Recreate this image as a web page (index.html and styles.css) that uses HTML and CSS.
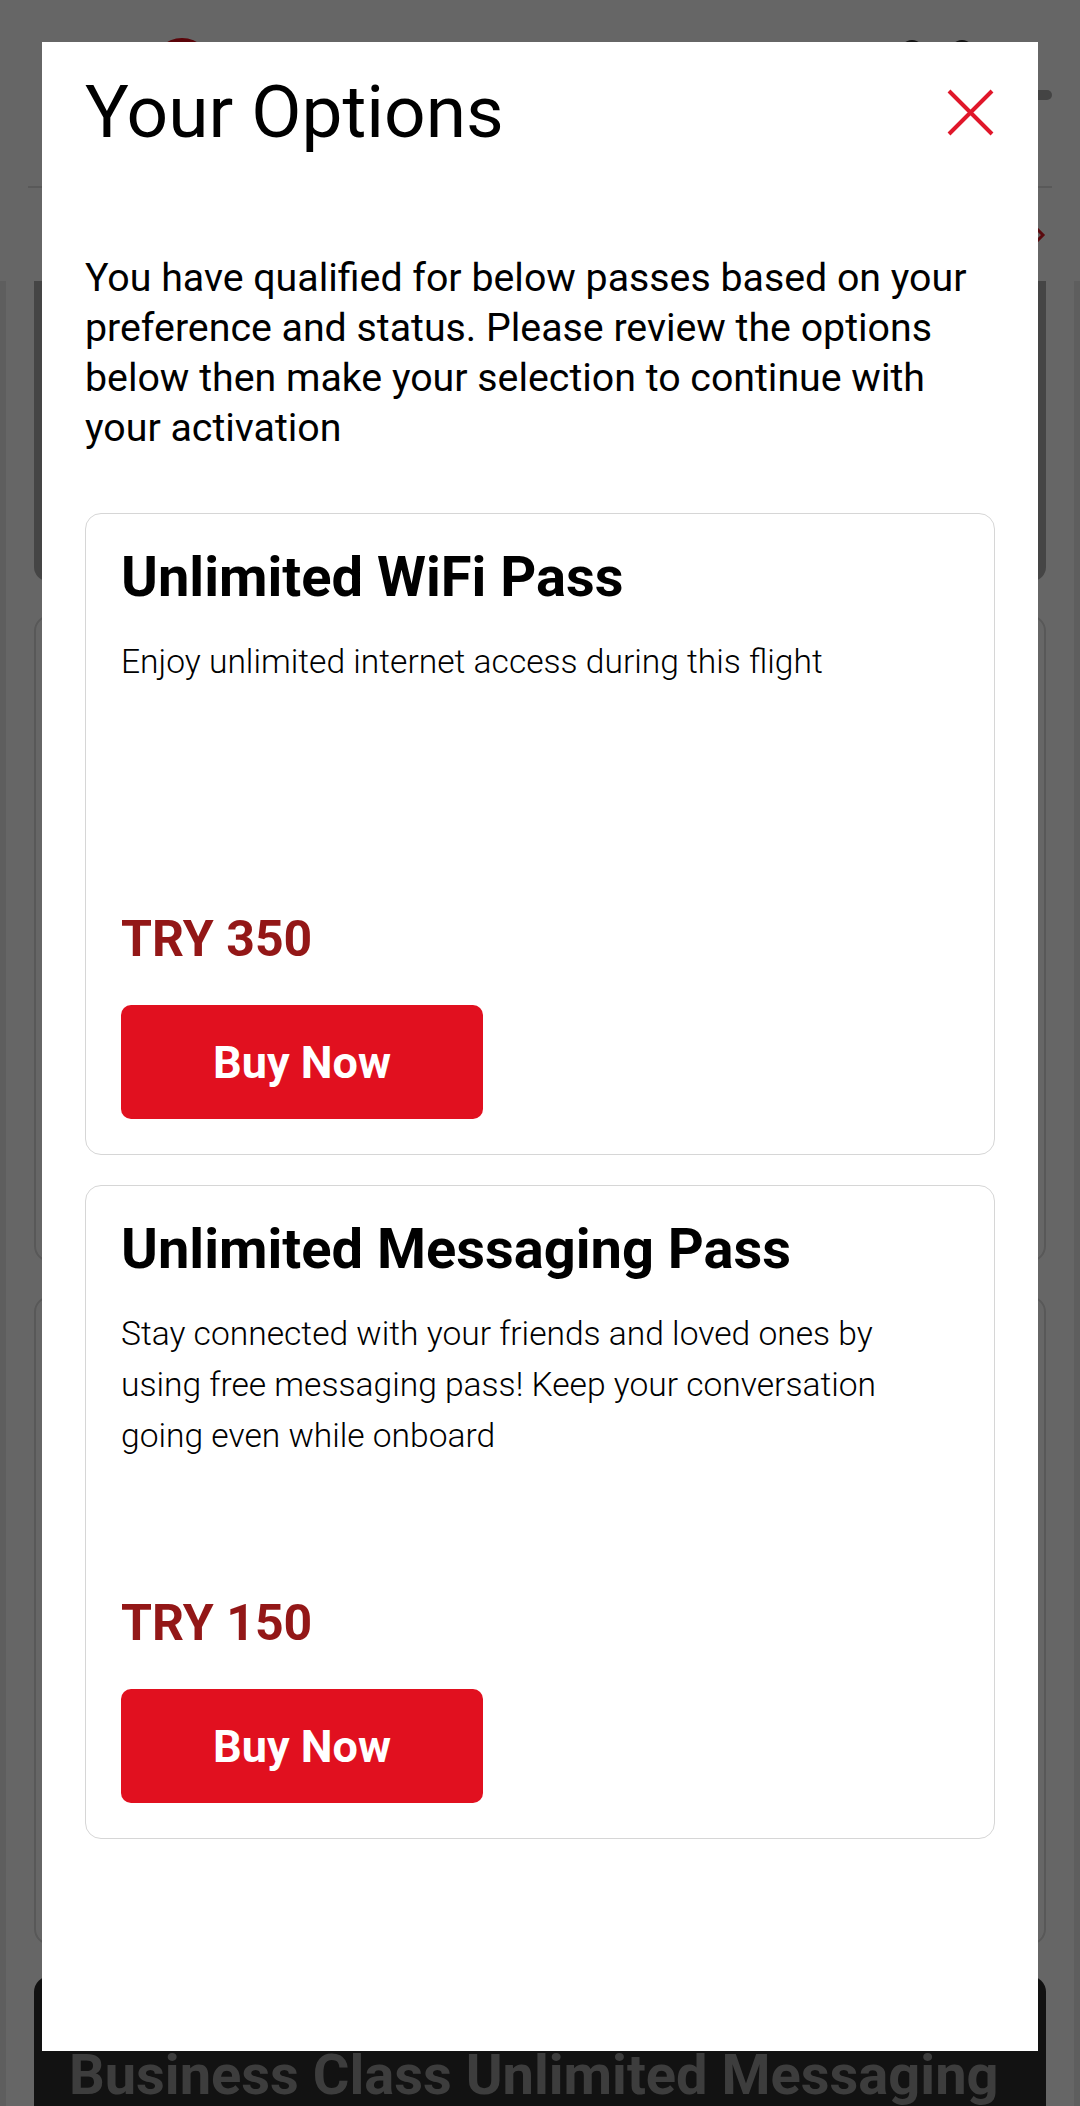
FILE: index.html
```html
<!DOCTYPE html>
<html lang="en">

<head>
  <meta charset="UTF-8">
  <title>Your Options</title>
  <link rel="stylesheet" href="styles.css">
</head>

<body>
  <div class="page">
    <header class="site-header">
      <span class="logo"></span>
      <div class="header-right">
        <div class="header-tools">
          <span class="tool-icon"></span>
          <span class="tool-icon"></span>
        </div>
        <span class="menu-bar"></span>
      </div>
    </header>
    <div class="sub-nav">
      <svg class="chevron" width="12" height="16" viewBox="0 0 12 16">
        <path d="M2 1 L9 8 L2 15" fill="none" stroke="#e01a25" stroke-width="3" />
      </svg>
    </div>
    <div class="content">
      <div class="content-inner">
        <div class="promo"></div>
        <div class="bg-card"></div>
        <div class="bg-card bg-card--tall"></div>
        <div class="bg-banner">Business Class Unlimited Messaging</div>
      </div>
    </div>
  </div>

  <div class="backdrop"></div>

  <div class="modal">
    <div class="modal-head">
      <h1 class="modal-title">Your Options</h1>
      <button class="modal-close" aria-label="Close">
        <svg width="47" height="47" viewBox="0 0 47 47">
          <path d="M2 2 L45 45 M45 2 L2 45" stroke="#e0172a" stroke-width="4" />
        </svg>
      </button>
    </div>
    <p class="modal-intro">You have qualified for below passes based on your preference and status. Please review the options below then make your selection to continue with your activation</p>

    <div class="pass-list">
      <div class="pass-card">
        <h2 class="pass-title">Unlimited WiFi Pass</h2>
        <p class="pass-desc">Enjoy unlimited internet access during this flight</p>
        <div class="pass-price">TRY 350</div>
        <button class="pass-buy">Buy Now</button>
      </div>
      <div class="pass-card">
        <h2 class="pass-title">Unlimited Messaging Pass</h2>
        <p class="pass-desc pass-desc--long">Stay connected with your friends and loved ones by using free messaging pass! Keep your conversation going even while onboard</p>
        <div class="pass-price">TRY 150</div>
        <button class="pass-buy">Buy Now</button>
      </div>
    </div>
  </div>
</body>

</html>
```

FILE: styles.css
```css
* {
  box-sizing: border-box;
}
html, body {
  margin: 0;
  height: 100%;
  overflow: hidden;
}
body {
  font-family: Roboto, "Noto Sans", sans-serif;
  background-color: #ffffff;
  color: #000000;
}

/* page behind the dialog */
.site-header {
  display: flex;
  justify-content: space-between;
  align-items: flex-start;
  height: 188px;
  margin: 0 28px;
  padding: 38px 0 0 124px;
  border-bottom: 2px solid #dedede;
}
.logo {
  width: 60px;
  height: 60px;
  border-radius: 50%;
  background-color: #e30a17;
}
.header-right {
  display: flex;
  align-items: flex-start;
  gap: 46px;
}
.header-tools {
  display: flex;
  gap: 26px;
  padding-top: 2px;
}
.tool-icon {
  width: 24px;
  height: 24px;
  border-radius: 50%;
  border: 3px solid #333333;
}
.menu-bar {
  width: 32px;
  height: 10px;
  margin-top: 52px;
  border-radius: 5px;
  background-color: #aaaaaa;
}
.sub-nav {
  display: flex;
  justify-content: flex-end;
  align-items: center;
  height: 93px;
  padding-right: 34px;
}
.content {
  padding: 0 6px;
  background-color: #ebebeb;
}
.content-inner {
  display: flex;
  flex-direction: column;
  gap: 34px;
  padding: 0 28px;
  background-color: #ffffff;
}
.promo {
  height: 300px;
  border-radius: 0 0 14px 14px;
  background-color: #acacac;
}
.bg-card {
  height: 647px;
  border: 2px solid #dcdcdc;
  border-radius: 16px;
}
.bg-card--tall {
  height: 649px;
}
.bg-banner {
  height: 200px;
  margin-top: -3px;
  padding: 66px 0 0 35px;
  border-radius: 16px 16px 0 0;
  background-color: #2e2e2e;
  color: #9a9a9a;
  font-size: 56px;
  font-weight: 700;
  white-space: nowrap;
}

/* dialog */
.backdrop {
  position: fixed;
  top: 0;
  right: 0;
  bottom: 0;
  left: 0;
  background-color: rgba(0, 0, 0, 0.6);
}
.modal {
  position: fixed;
  top: 42px;
  left: 42px;
  width: 996px;
  height: 2009px;
  padding: 28px 43px 0;
  background-color: #ffffff;
  overflow: hidden;
}
.modal-head {
  display: flex;
  justify-content: space-between;
  align-items: center;
  height: 84px;
}
.modal-title {
  margin: 0;
  font-size: 73px;
  font-weight: 400;
  line-height: 84px;
}
.modal-close {
  display: flex;
  margin-right: 1px;
  padding: 0;
  border: 0;
  background: none;
}
.modal-intro {
  margin: 99px 0 0;
  font-size: 39.3px;
  line-height: 50px;
}
.pass-list {
  display: flex;
  flex-direction: column;
  gap: 30px;
  margin-top: 60px;
}
.pass-card {
  padding: 33px 35px 35px;
  border: 1px solid #d6d6d6;
  border-radius: 16px;
}
.pass-title {
  margin: 0;
  font-size: 56px;
  font-weight: 700;
  line-height: 61px;
}
.pass-desc {
  min-height: 275px;
  margin: 28px 0 0;
  font-size: 33.6px;
  font-weight: 300;
  line-height: 51px;
}
.pass-desc--long {
  min-height: 287px;
}
.pass-price {
  color: #931717;
  font-size: 50px;
  font-weight: 700;
  line-height: 56px;
}
.pass-buy {
  display: block;
  width: 362px;
  height: 114px;
  margin-top: 38px;
  border: 0;
  border-radius: 10px;
  background-color: #e1101f;
  color: #ffffff;
  font-family: Roboto, "Noto Sans", sans-serif;
  font-size: 45px;
  font-weight: 700;
}
```
